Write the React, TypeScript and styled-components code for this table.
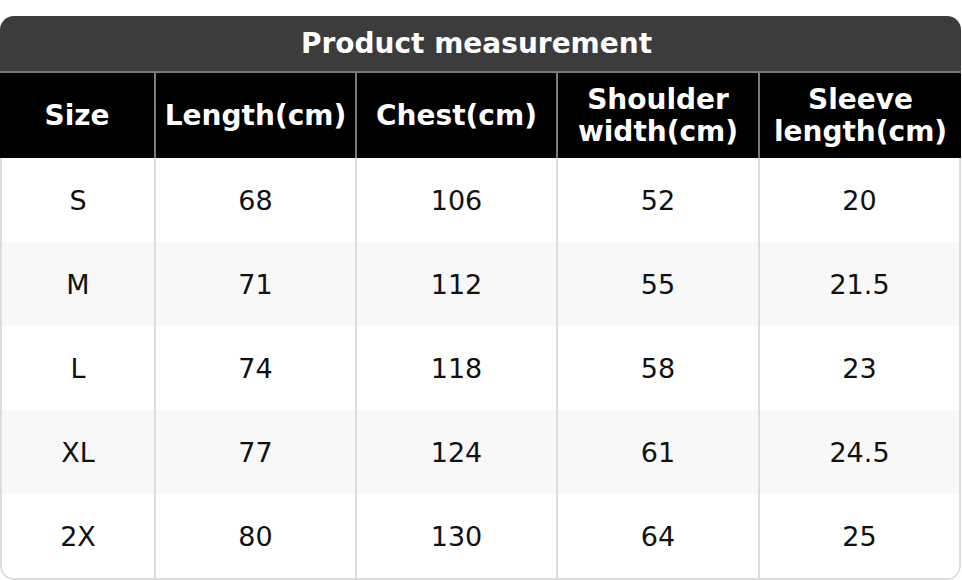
import { FC } from "react";
import styled, { createGlobalStyle } from "styled-components";

const GlobalStyle = createGlobalStyle`
    html, body {
        margin: 0;
        padding: 0;
        background: #ffffff;
    }
    body {
        font-family: "DejaVu Sans", "Liberation Sans", sans-serif;
    }
`

const Card = styled.section`
    margin-top: 16px;
    width: 961px;
    border-radius: 14px;
    overflow: hidden;
    background: #ffffff;
`
const TitleBar = styled.header`
    display: flex;
    justify-content: center;
    align-items: center;
    height: 55px;
    padding-right: 8px;
    background-color: #3c3c3c;
    color: #ffffff;
    font-size: 28px;
    font-weight: bold;
    border-bottom: 2px solid #7a7a7a;
`
const HeaderRow = styled.div`
    display: grid;
    grid-template-columns: 154px 201px 201px 202px 1fr;
    height: 85px;
    background-color: #000000;
`
const HeaderCell = styled.div`
    display: flex;
    justify-content: center;
    align-items: center;
    text-align: center;
    color: #ffffff;
    font-size: 28px;
    font-weight: bold;
    line-height: 32px;

    & + & {
        border-left: 2px solid #7a7a7a;
    }
`
const Body = styled.div`
    border: 2px solid #dddddd;
    border-top: none;
    border-radius: 0 0 14px 14px;
    overflow: hidden;
`
const Row = styled.div<{ $striped: boolean }>`
    display: grid;
    grid-template-columns: 152px 201px 201px 202px 1fr;
    height: 84px;
    background-color: ${(p) => (p.$striped ? "#f8f8f8" : "#ffffff")};
`
const Cell = styled.div`
    display: flex;
    justify-content: center;
    align-items: center;
    color: #111111;
    font-size: 27px;

    & + & {
        border-left: 2px solid #dddddd;
    }
`

const headers = ["Size", "Length(cm)", "Chest(cm)", "Shoulder width(cm)", "Sleeve length(cm)"];

const rows = [
    ["S", "68", "106", "52", "20"],
    ["M", "71", "112", "55", "21.5"],
    ["L", "74", "118", "58", "23"],
    ["XL", "77", "124", "61", "24.5"],
    ["2X", "80", "130", "64", "25"],
];

const App: FC = () => {
    return (
        <>
            <GlobalStyle />
            <Card>
                <TitleBar>Product measurement</TitleBar>
                <HeaderRow>
                    {headers.map((h) => (
                        <HeaderCell key={h}>
                            {h.includes(" ") ? (
                                <span>
                                    {h.split(" ")[0]}
                                    <br />
                                    {h.split(" ")[1]}
                                </span>
                            ) : (
                                h
                            )}
                        </HeaderCell>
                    ))}
                </HeaderRow>
                <Body>
                    {rows.map((r, i) => (
                        <Row key={r[0]} $striped={i % 2 === 1}>
                            {r.map((v, j) => (
                                <Cell key={j}>{v}</Cell>
                            ))}
                        </Row>
                    ))}
                </Body>
            </Card>
        </>
    );
};

export default App;
